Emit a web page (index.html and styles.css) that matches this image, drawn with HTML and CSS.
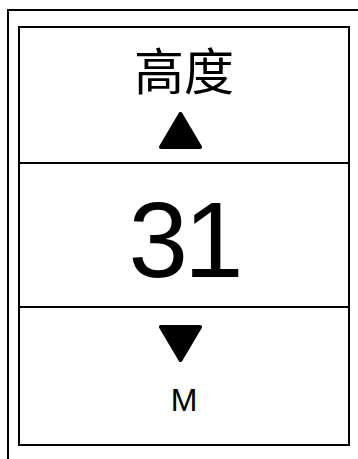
FILE: index.html
```html
<!DOCTYPE html>
<html lang="zh-CN">
<head>
  <meta charset="UTF-8" />
  <title>高度</title>
  <link rel="stylesheet" href="styles.css">
</head>
<body>
  <div class="frame">
    <div class="panel">
      <!-- 标题 + 上调 -->
      <section class="cell cell-top">
        <div class="title">高度</div>
        <svg class="arrow" width="51" height="37" viewBox="0 0 51 37">
          <path d="M21.5 2 L41 35 L2 35 Z" />
        </svg>
      </section>

      <!-- 数值 -->
      <section class="cell cell-value">
        <div class="value">31</div>
      </section>

      <!-- 下调 + 单位 -->
      <section class="cell cell-bottom">
        <svg class="arrow" width="51" height="37" viewBox="0 0 51 37">
          <path d="M2 2 L41 2 L21.5 35 Z" />
        </svg>
        <div class="unit">M</div>
      </section>
    </div>
  </div>
</body>
</html>
```

FILE: styles.css
```css
html, body {
  margin: 0;
  padding: 0;
  background: #fff;
  overflow: hidden;
}
body {
  width: 358px;
  height: 459px;
  font-family: "Liberation Sans", Arial, "Noto Sans CJK SC", sans-serif;
  color: #000;
}
.frame {
  box-sizing: border-box;
  margin: 9px 0 0 7px;
  height: 450px;
  border-top: 2px solid #000;
  border-left: 2px solid #000;
  padding: 15px 0 0 9px;
}
.panel {
  width: 332px;
  box-sizing: border-box;
  border: 2px solid #000;
  display: flex;
  flex-direction: column;
}
.cell {
  display: flex;
  flex-direction: column;
  align-items: center;
  box-sizing: border-box;
}
.cell + .cell {
  border-top: 2px solid #000;
}
.cell-top {
  height: 134px;
  padding-top: 15px;
}
.cell-value {
  height: 144px;
  padding-top: 23px;
}
.cell-bottom {
  height: 138px;
  padding-top: 17px;
}
.title {
  font-family: "Noto Sans CJK SC", sans-serif;
  font-size: 50px;
  line-height: 50px;
  margin-bottom: 19px;
}
.arrow {
  display: block;
}
.arrow path {
  fill: #000;
  stroke: #000;
  stroke-width: 4;
  stroke-linejoin: round;
}
.value {
  font-size: 107px;
  line-height: 1;
  letter-spacing: -4px;
}
.unit {
  font-size: 32px;
  line-height: 1;
  margin-top: 22px;
}
```
